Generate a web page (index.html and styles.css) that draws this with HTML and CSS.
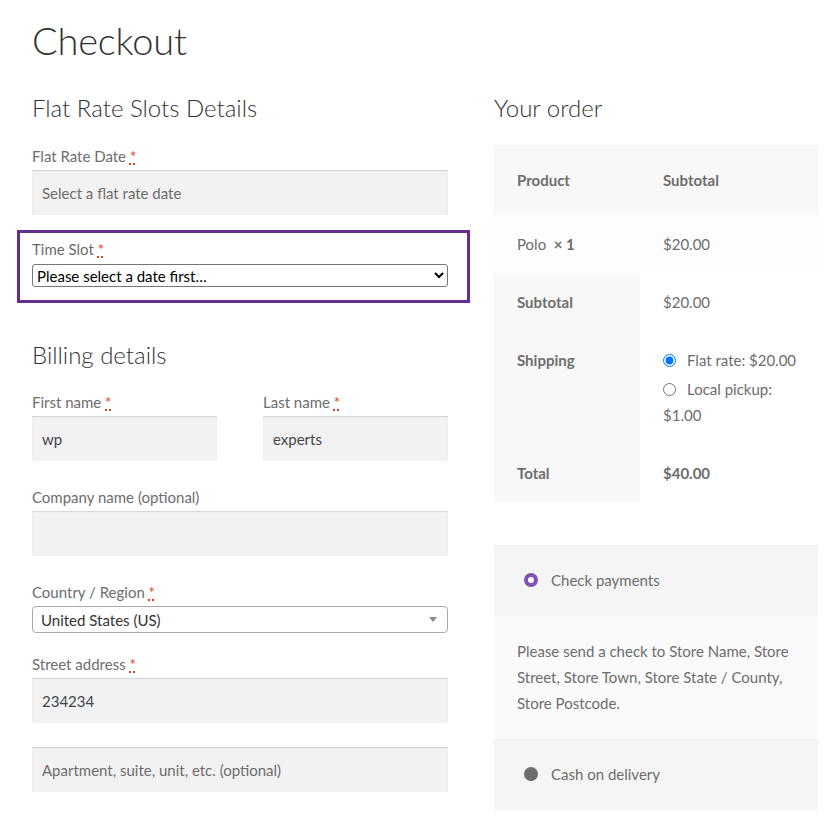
FILE: index.html
```html
<!DOCTYPE html>
<html lang="en">
<head>
    <meta charset="UTF-8">
    <meta name="viewport" content="width=device-width, initial-scale=1.0">
    <title>Checkout</title>
    <link rel="stylesheet" href="styles.css">
</head>
<body>
    <div class="site-content">
        <h1 class="entry-title">Checkout</h1>

        <div class="checkout">
            <div class="col-set">
                <h3>Flat Rate Slots Details</h3>
                <p class="form-row date-row">
                    <label>Flat Rate Date <abbr class="required" title="required">*</abbr></label>
                    <input type="text" class="input-text" placeholder="Select a flat rate date">
                </p>
                <div class="form-row slot-row">
                    <label>Time Slot <abbr class="required" title="required">*</abbr></label>
                    <select class="slot-select">
                        <option>Please select a date first…</option>
                    </select>
                </div>

                <h3 class="billing-title">Billing details</h3>
                <div class="name-row">
                    <p class="form-row">
                        <label>First name <abbr class="required" title="required">*</abbr></label>
                        <input type="text" class="input-text" value="wp">
                    </p>
                    <p class="form-row">
                        <label>Last name <abbr class="required" title="required">*</abbr></label>
                        <input type="text" class="input-text" value="experts">
                    </p>
                </div>
                <p class="form-row">
                    <label>Company name <span class="optional">(optional)</span></label>
                    <input type="text" class="input-text">
                </p>
                <div class="form-row country-row">
                    <label>Country / Region <abbr class="required" title="required">*</abbr></label>
                    <div class="select2">
                        <span class="select2-text">United States (US)</span>
                        <span class="select2-arrow"></span>
                    </div>
                </div>
                <p class="form-row">
                    <label>Street address <abbr class="required" title="required">*</abbr></label>
                    <input type="text" class="input-text" value="234234">
                    <input type="text" class="input-text second-line" placeholder="Apartment, suite, unit, etc. (optional)">
                </p>
            </div>

            <div class="order-review">
                <h3>Your order</h3>
                <table class="shop-table">
                    <thead>
                        <tr>
                            <th class="col-name">Product</th>
                            <th>Subtotal</th>
                        </tr>
                    </thead>
                    <tbody>
                        <tr>
                            <td>Polo <strong>&nbsp;×&nbsp;1</strong></td>
                            <td>$20.00</td>
                        </tr>
                    </tbody>
                    <tfoot>
                        <tr>
                            <th>Subtotal</th>
                            <td>$20.00</td>
                        </tr>
                        <tr class="shipping">
                            <th>Shipping</th>
                            <td>
                                <ul class="shipping-methods">
                                    <li><input type="radio" name="ship" checked><label>Flat rate: $20.00</label></li>
                                    <li><input type="radio" name="ship"><label>Local pickup: $1.00</label></li>
                                </ul>
                            </td>
                        </tr>
                        <tr>
                            <th>Total</th>
                            <td><strong>$40.00</strong></td>
                        </tr>
                    </tfoot>
                </table>

                <div class="payment">
                    <div class="method">
                        <span class="dot active"></span>
                        <span>Check payments</span>
                    </div>
                    <div class="payment-box">
                        Please send a check to Store Name, Store Street, Store Town, Store State / County, Store Postcode.
                    </div>
                    <div class="method">
                        <span class="dot"></span>
                        <span>Cash on delivery</span>
                    </div>
                </div>
            </div>
        </div>
    </div>
</body>
</html>
```

FILE: styles.css
```css
body {
    margin: 0;
    font-family: Lato, "Noto Sans", sans-serif;
    font-size: 15px;
    line-height: 26px;
    color: #6d6d6d;
    background: #fff;
}
.site-content {
    padding: 15px 22px 0 32px;
}
h1, h3 {
    color: #333;
    font-weight: 300;
    margin: 0;
}
.entry-title {
    font-size: 38px;
    line-height: 51px;
    letter-spacing: -0.2px;
}
h3 {
    font-size: 24px;
    line-height: 34px;
    margin-top: 25px;
    margin-bottom: 18px;
}
.checkout {
    display: flex;
    justify-content: space-between;
}
.col-set {
    width: 416px;
}
.order-review {
    width: 324px;
}
.form-row {
    margin: 0 0 23px;
}
.form-row label {
    display: block;
    line-height: 26px;
}
.date-row {
    margin-bottom: 15px;
}
abbr.required {
    color: #e2401c;
    text-decoration: underline dotted;
    text-decoration-thickness: 2px;
}
.input-text {
    display: block;
    box-sizing: border-box;
    width: 100%;
    height: 45px;
    padding: 0 10px;
    margin-top: 1px;
    border: 0;
    background: #f2f2f2;
    box-shadow: inset 0 1px 1px rgba(0, 0, 0, 0.125);
    font-family: inherit;
    font-size: 15px;
    color: #43454b;
    outline: none;
}
.input-text::placeholder {
    color: #6d6d6d;
}
.input-text.second-line {
    margin-top: 24px;
}

/* highlighted time slot field */
.slot-row {
    border: 3px solid #662d91;
    margin: 0 -22px 0 -15px;
    padding: 3px 19px 13px 12px;
}
.slot-select {
    display: block;
    width: 100%;
    height: 23px;
    margin-top: 2px;
    font-family: inherit;
    font-size: 15px;
    color: #000;
    background: #fff;
    border: 1px solid #767676;
    border-radius: 3px;
}
.billing-title {
    margin-top: 35px;
    margin-bottom: 17px;
}
.name-row {
    display: flex;
    justify-content: space-between;
}
.name-row .form-row {
    width: 185px;
}
.country-row {
    margin-bottom: 18px;
}
.select2 {
    display: flex;
    align-items: center;
    justify-content: space-between;
    height: 27px;
    margin-top: 1px;
    padding: 0 10px 0 8px;
    border: 1px solid #aaa;
    border-radius: 4px;
    box-sizing: border-box;
    color: #333;
}
.select2-arrow {
    width: 0;
    height: 0;
    border-left: 4px solid transparent;
    border-right: 4px solid transparent;
    border-top: 5px solid #888;
}

/* order table */
.shop-table {
    width: 100%;
    table-layout: fixed;
    border-collapse: collapse;
    border-spacing: 0;
    margin-top: 20px;
}
.order-review h3 {
    margin-bottom: 0;
}
.shop-table th, .shop-table td {
    text-align: left;
    vertical-align: top;
    padding: 16px 12px 16px 23px;
}
.shop-table th {
    font-weight: 700;
}
.shop-table .col-name {
    width: 111px;
}
.shop-table thead th {
    background: #f8f8f8;
    padding-top: 22px;
    padding-bottom: 22px;
}
.shop-table tbody td {
    background: #fdfdfd;
}
.shop-table tfoot th {
    background: #f8f8f8;
}
.shop-table strong {
    font-weight: 700;
}
.shipping-methods {
    list-style: none;
    margin: 0;
    padding: 0;
}
.shipping-methods li {
    margin-bottom: 3px;
}
.shipping-methods li:last-child {
    margin-bottom: 0;
}
.shipping-methods input {
    margin: 0 11px 0 0;
    vertical-align: -1px;
}

/* payment methods */
.payment {
    margin-top: 43px;
    background: #f5f5f5;
}
.method {
    display: flex;
    align-items: center;
    padding: 22px 23px 23px 30px;
    line-height: 26px;
}
.dot {
    width: 14px;
    height: 14px;
    border-radius: 50%;
    background: #6d6d6d;
    margin-right: 13px;
    box-sizing: border-box;
}
.dot.active {
    background: #fff;
    border: 4px solid #7f54b3;
}
.payment-box {
    background: #fafafa;
    padding: 22px 23px 23px;
    line-height: 26px;
}
```
